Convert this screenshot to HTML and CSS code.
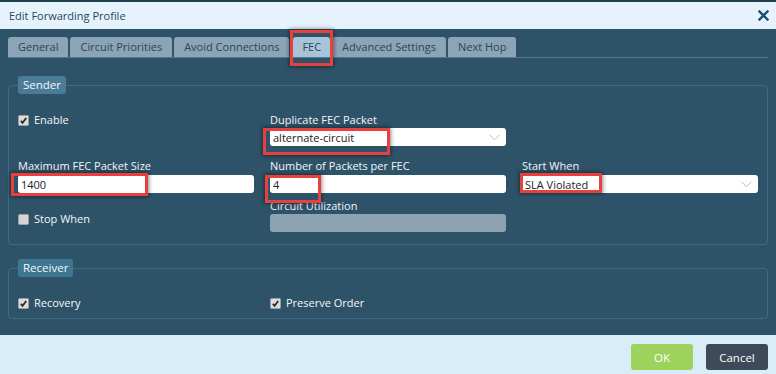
FILE: index.html
```html
<!DOCTYPE html>
<html lang="en">
<head>
    <meta charset="UTF-8">
    <meta name="viewport" content="width=device-width, initial-scale=1.0">
    <title>Edit Forwarding Profile</title>
    <link rel="stylesheet" href="styles.css">
</head>
<body>
    <div class="dialog">
        <div class="titlebar">
            <span class="title">Edit Forwarding Profile</span>
            <svg class="close" width="11" height="11" viewBox="0 0 11 11">
                <path d="M1.5 1.5 L9.5 9.5 M9.5 1.5 L1.5 9.5" stroke="#1c4c6e" stroke-width="2.4" stroke-linecap="square"/>
            </svg>
        </div>

        <div class="content">
            <div class="tabs">
                <div class="tab">General</div>
                <div class="tab">Circuit Priorities</div>
                <div class="tab">Avoid Connections</div>
                <div class="tab active">FEC</div>
                <div class="tab">Advanced Settings</div>
                <div class="tab">Next Hop</div>
            </div>

            <fieldset class="group sender">
                <legend>Sender</legend>
                <div class="row first">
                    <div class="check">
                        <svg class="box" width="11" height="11" viewBox="0 0 11 11">
                            <rect x="0.5" y="0.5" width="10" height="10" rx="1" fill="#dcdcdc" stroke="#9aa0a4"/>
                            <path d="M2.8 5.8 L4.6 7.8 L8.2 3" stroke="#2a2a2a" stroke-width="1.8" fill="none"/>
                        </svg>
                        <span>Enable</span>
                    </div>
                    <div class="field">
                        <label>Duplicate FEC Packet</label>
                        <div class="select">
                            <span>alternate-circuit</span>
                            <svg width="11" height="7" viewBox="0 0 11 7"><path d="M0.5 0.8 L5.5 5.8 L10.5 0.8" stroke="#b4b9bd" fill="none"/></svg>
                        </div>
                    </div>
                    <div></div>
                </div>

                <div class="row second">
                    <div class="field">
                        <label>Maximum FEC Packet Size</label>
                        <input class="input" type="text" value="1400">
                    </div>
                    <div class="field">
                        <label>Number of Packets per FEC</label>
                        <input class="input" type="text" value="4">
                    </div>
                    <div class="field">
                        <label>Start When</label>
                        <div class="select">
                            <span>SLA Violated</span>
                            <svg width="11" height="7" viewBox="0 0 11 7"><path d="M0.5 0.8 L5.5 5.8 L10.5 0.8" stroke="#b4b9bd" fill="none"/></svg>
                        </div>
                    </div>
                </div>

                <div class="row third">
                    <div class="check stop">
                        <svg class="box" width="11" height="11" viewBox="0 0 11 11">
                            <rect x="0.5" y="0.5" width="10" height="10" rx="1" fill="#d4d4d4" stroke="#9aa0a4"/>
                        </svg>
                        <span>Stop When</span>
                    </div>
                    <div class="field">
                        <label>Circuit Utilization</label>
                        <div class="input disabled"></div>
                    </div>
                    <div></div>
                </div>
            </fieldset>

            <fieldset class="group receiver">
                <legend>Receiver</legend>
                <div class="row">
                    <div class="check">
                        <svg class="box" width="11" height="11" viewBox="0 0 11 11">
                            <rect x="0.5" y="0.5" width="10" height="10" rx="1" fill="#dcdcdc" stroke="#9aa0a4"/>
                            <path d="M2.8 5.8 L4.6 7.8 L8.2 3" stroke="#2a2a2a" stroke-width="1.8" fill="none"/>
                        </svg>
                        <span>Recovery</span>
                    </div>
                    <div class="check">
                        <svg class="box" width="11" height="11" viewBox="0 0 11 11">
                            <rect x="0.5" y="0.5" width="10" height="10" rx="1" fill="#dcdcdc" stroke="#9aa0a4"/>
                            <path d="M2.8 5.8 L4.6 7.8 L8.2 3" stroke="#2a2a2a" stroke-width="1.8" fill="none"/>
                        </svg>
                        <span>Preserve Order</span>
                    </div>
                    <div></div>
                </div>
            </fieldset>
        </div>

        <div class="footer">
            <button class="btn ok">OK</button>
            <button class="btn cancel">Cancel</button>
        </div>

        <!-- annotation boxes drawn over the screenshot -->
        <div class="mark mark-fec"></div>
        <div class="mark mark-dup"></div>
        <div class="mark mark-max"></div>
        <div class="mark mark-pkt"></div>
        <div class="mark mark-sla"></div>
    </div>
</body>
</html>
```

FILE: styles.css
```css
body {
    margin: 0;
    padding: 0;
    font-family: "Open Sans", "Liberation Sans", sans-serif;
    font-size: 11px;
    background-color: #2e5369;
}

.dialog {
    position: relative;
    width: 776px;
    height: 374px;
    overflow: hidden;
}

.titlebar {
    height: 27px;
    border-top: 2px solid #23404f;
    background-color: #e6f3fc;
    display: flex;
    align-items: center;
    justify-content: space-between;
    padding: 0 7px 0 9px;
    color: #1f4660;
}

.title {
    font-size: 11px;
}

.content {
    background-color: #2e5369;
    height: 306px;
    box-sizing: border-box;
    padding: 8px 8px 0 8px;
}

.tabs {
    display: flex;
    gap: 2px;
    height: 20px;
    border-bottom: 1px solid #4c7a92;
}

.tab {
    height: 20px;
    line-height: 20px;
    padding: 0 10px;
    background-color: #8ba4b6;
    color: #2b4658;
    border-radius: 3px 3px 0 0;
}

.tab.active {
    background-color: #a9c4d7;
    margin-left: 2px;
    padding: 0 9px;
}

.group {
    margin: 18px 0 0 0;
    padding: 0 9px 12px 9px;
    border: 1px solid #3f6b83;
    border-radius: 4px;
    min-width: 0;
}

.group legend {
    padding: 0 5px;
    height: 18px;
    line-height: 18px;
    font-size: 11.5px;
    background-color: #4a7c97;
    color: #f4f8fa;
    border-radius: 3px;
}

.receiver {
    margin-top: 14px;
    padding-bottom: 8px;
}

.receiver legend {
    background-color: #3f7692;
}

.row {
    display: grid;
    grid-template-columns: 236px 236px 236px;
    column-gap: 16px;
    color: #f2f6f8;
}

.sender .first {
    margin-top: 19px;
}

.sender .second {
    margin-top: 13px;
}

.sender .third {
    margin-top: 6px;
}

.receiver .row {
    margin-top: 19px;
}

.field label {
    display: block;
    height: 14px;
    line-height: 14px;
}

.check {
    display: flex;
    align-items: center;
    height: 14px;
    line-height: 14px;
}

.check .box {
    margin-right: 5px;
}

.check.stop {
    margin-top: 13px;
}

.select,
.input {
    display: flex;
    align-items: center;
    justify-content: space-between;
    box-sizing: border-box;
    width: 236px;
    height: 18px;
    margin-top: 1px;
    padding: 0 6px 0 3px;
    border: none;
    border-radius: 3px;
    background-color: #fff;
    color: #222;
    font-family: inherit;
    font-size: 11px;
    outline: none;
}

.second .input,
.second .select {
    margin-top: 2px;
}

.input.disabled {
    background-color: #8ea3b2;
}

.footer {
    height: 39px;
    box-sizing: border-box;
    background-color: #d8edf8;
    display: flex;
    justify-content: flex-end;
    gap: 13px;
    padding: 9px 8px 0 0;
}

.btn {
    width: 62px;
    height: 26px;
    border: none;
    border-radius: 3px;
    color: #fff;
    font-family: inherit;
    font-size: 11.5px;
    cursor: pointer;
}

.btn.ok {
    background-color: #9dd35c;
}

.btn.cancel {
    background-color: #3e4a59;
}

.close {
    display: block;
}

.mark {
    position: absolute;
    box-sizing: border-box;
    border: 3px solid #e8403f;
    box-shadow: 0 0 4px 1px rgba(0, 0, 0, 0.45);
}

.mark-fec {
    left: 290px;
    top: 30px;
    width: 43px;
    height: 36px;
}

.mark-dup {
    left: 263px;
    top: 128px;
    width: 127px;
    height: 27px;
}

.mark-max {
    left: 11px;
    top: 173px;
    width: 137px;
    height: 23px;
}

.mark-pkt {
    left: 265px;
    top: 175px;
    width: 56px;
    height: 28px;
}

.mark-sla {
    left: 520px;
    top: 173px;
    width: 82px;
    height: 20px;
}
```
